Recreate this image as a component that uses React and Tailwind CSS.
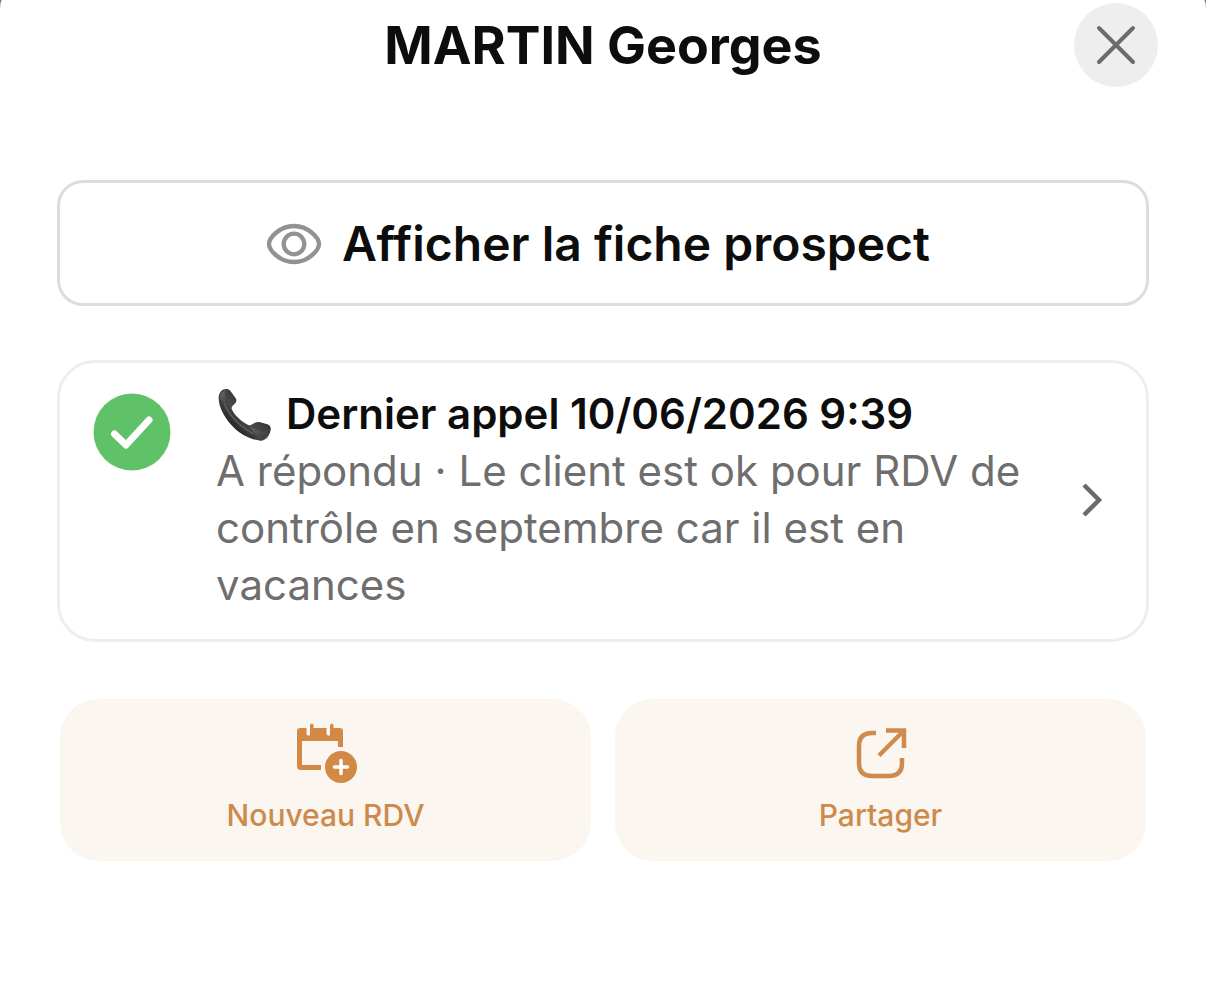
import React from "react";

const CloseIcon = () => (
  <svg viewBox="0 0 40 40" className="size-10" fill="none" stroke="#6b6b6b" strokeWidth="4" strokeLinecap="round" aria-hidden="true">
    <path d="M3 3 37 37M37 3 3 37" />
  </svg>
);

const EyeIcon = () => (
  <svg viewBox="0 0 56 42" className="h-[42px] w-14 shrink-0" fill="none" stroke="#929292" strokeWidth="4.300" aria-hidden="true">
    <path d="M3 21C3 15 13.500 3 28 3S53 15 53 21 42.500 39 28 39 3 27 3 21Z" />
    <circle cx="28" cy="21" r="10.3" />
  </svg>
);

const CheckIcon = () => (
  <svg viewBox="0 0 78 78" className="size-[78px] shrink-0" fill="none" aria-hidden="true">
    <circle cx="39" cy="39" r="38.5" fill="#5fc168" />
    <path d="M21.500 41 33 52 56 27" stroke="#fff" strokeWidth="7" strokeLinecap="round" strokeLinejoin="round" />
  </svg>
);

const PhoneIcon = () => (
  <svg viewBox="0 -4 165 165" className="size-[55px] shrink-0" aria-hidden="true">
    <defs>
      <linearGradient id="handset" x1="0.3" y1="0.7" x2="0.65" y2="0.35">
        <stop offset="0" stopColor="#2c2c2c" />
        <stop offset="0.45" stopColor="#4a4a4a" />
        <stop offset="1" stopColor="#333" />
      </linearGradient>
      <linearGradient id="cup" x1="0" y1="0" x2="1" y2="1">
        <stop offset="0" stopColor="#6a6a6a" />
        <stop offset="1" stopColor="#353535" />
      </linearGradient>
    </defs>
    <path
      d="M5 28C6 14 17 3 31 5Q37 6 41 12L57 34Q60 39 56 46L46 57Q42 62 46 69C55 87 76 105 94 113Q99 115 103 112L114 106Q121 103 130 105L151 111Q163 116 161 128C158 145 146 161 130 160C104 157 75 143 54 124C25 97 3 58 5 28Z"
      fill="url(#handset)"
    />
    <path d="M9 27Q14 9 31 9Q22 15 24 30Q25 43 38 62Q28 52 20 45Q10 38 9 27Z" fill="url(#cup)" />
    <path d="M96 119Q108 121 120 128Q138 139 156 128Q149 149 132 155Q119 151 112 137Q106 126 96 119Z" fill="url(#cup)" />
    <path d="M22 48C35 82 68 116 108 139" fill="none" stroke="#606060" strokeWidth="4" strokeLinecap="round" />
  </svg>
);

const ChevronIcon = () => (
  <svg viewBox="0 0 22 36" className="h-9 w-[22px] shrink-0" fill="none" stroke="#6b6b6b" strokeWidth="4.500" aria-hidden="true">
    <path d="M2 4 17 19 2 34" />
  </svg>
);

const CalendarPlusIcon = () => (
  <svg viewBox="0 0 62 62" className="size-[62px]" aria-hidden="true">
    <path
      d="M5 5H11.500V11Q13 14 15 12V2Q17 -1 18.500 2V5H31.500V11Q33 14 35 12V2Q37 -1 38.500 2V5H45Q48 5 48 8V24H43V18H7V42H26V47H6Q2 47 2 43V8Q2 5 5 5Z"
      fill="#d48846"
    />
    <circle cx="46" cy="44" r="16" fill="#d48846" />
    <path d="M46 37.500V50.500M39.500 44H52.500" stroke="#fff" strokeWidth="3.500" strokeLinecap="round" />
  </svg>
);

const ShareIcon = () => (
  <svg viewBox="0 0 52 52" className="size-[52px]" fill="none" stroke="#cf8b4d" strokeWidth="4.500" aria-hidden="true">
    <path d="M21 5H17Q4 5 4 18V35Q4 48 17 48H34Q47 48 47 35V30" />
    <path d="M31 2.500H49V20" />
    <path d="M49 2.500 24 27.500" />
  </svg>
);

const actions = [
  { label: "Nouveau RDV", icon: <CalendarPlusIcon /> },
  { label: "Partager", icon: <ShareIcon /> },
];

const App = () => {
  return (
    <div className="min-h-screen bg-[#777] font-['Inter',sans-serif] text-[#0d0d0d]">
      <main className="min-h-screen rounded-t-[2px_10px] bg-white px-[57px] pb-12">
        <header className="-mr-[9px] -ml-[9px] grid grid-cols-[84px_1fr_84px] items-center pt-[3px]">
          <h1 className="col-start-2 pt-0.5 text-center text-[52px] leading-[80px] font-bold">MARTIN Georges</h1>
          <button type="button" aria-label="Fermer" className="flex size-[84px] items-center justify-center rounded-full bg-[#eee]">
            <CloseIcon />
          </button>
        </header>

        <button
          type="button"
          className="mt-[93px] flex w-full items-center justify-center gap-5 rounded-[26px] border-3 border-[#ddd] pt-[29px] pb-[27px] pr-2.5 text-5xl leading-16 font-semibold"
        >
          <EyeIcon />
          Afficher la fiche prospect
        </button>

        <button
          type="button"
          className="mt-[54px] flex w-full items-start rounded-[38px] border-3 border-[#eee] pt-[22px] pr-[42px] pb-[26px] pl-[33px] text-left"
        >
          <span className="mt-2">
            <CheckIcon />
          </span>
          <span className="ml-[45px] min-w-0 flex-1 text-[42px] leading-[57px]">
            <span className="flex items-center gap-3.5 pl-px font-semibold">
              <PhoneIcon />
              Dernier appel 10/06/2026 9:39
            </span>
            <span className="block text-[#6e6e6e]">
              A répondu · Le client est ok pour RDV de contrôle en septembre car il est en vacances
            </span>
          </span>
          <span className="ml-6 self-center">
            <ChevronIcon />
          </span>
        </button>

        <div className="mt-[57px] grid grid-cols-2 gap-6 px-[3px]">
          {actions.map(action => (
            <button
              key={action.label}
              type="button"
              className="flex flex-col items-center rounded-[38px] bg-[#fbf6ef] pt-6 pb-[26px] text-3xl leading-10 font-medium text-[#cd8a4d]"
            >
              <span className="flex h-[62px] items-center">{action.icon}</span>
              <span className="mt-2.5">{action.label}</span>
            </button>
          ))}
        </div>
      </main>
    </div>
  );
};

export default App;
